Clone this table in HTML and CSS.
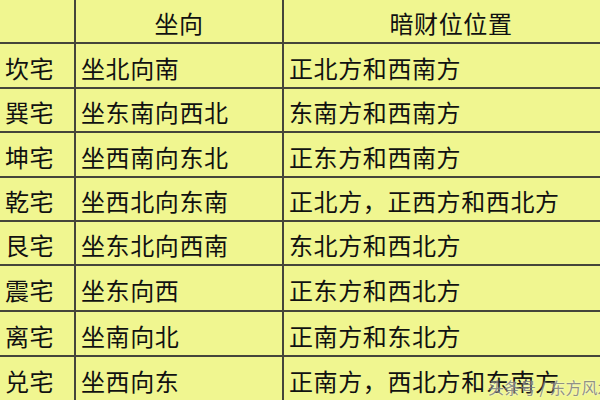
FILE: index.html
```html
<!DOCTYPE html>
<html lang="zh">
<head>
<meta charset="utf-8">
<link rel="stylesheet" href="styles.css">
</head>
<body>
<div class="page">
  <div class="grid">
    <div class="cell"></div>
    <div class="cell head">坐向</div>
    <div class="cell head">暗财位位置</div>

    <div class="cell">坎宅</div>
    <div class="cell">坐北向南</div>
    <div class="cell">正北方和西南方</div>

    <div class="cell">巽宅</div>
    <div class="cell">坐东南向西北</div>
    <div class="cell">东南方和西南方</div>

    <div class="cell">坤宅</div>
    <div class="cell">坐西南向东北</div>
    <div class="cell">正东方和西南方</div>

    <div class="cell">乾宅</div>
    <div class="cell">坐西北向东南</div>
    <div class="cell">正北方，正西方和西北方</div>

    <div class="cell">艮宅</div>
    <div class="cell">坐东北向西南</div>
    <div class="cell">东北方和西北方</div>

    <div class="cell">震宅</div>
    <div class="cell">坐东向西</div>
    <div class="cell">正东方和西北方</div>

    <div class="cell">离宅</div>
    <div class="cell">坐南向北</div>
    <div class="cell">正南方和东北方</div>

    <div class="cell">兑宅</div>
    <div class="cell">坐西向东</div>
    <div class="cell">正南方，西北方和东南方</div>
  </div>
  <div class="watermark">头条号 / 东方风水</div>
</div>
</body>
</html>
```

FILE: styles.css
```css
html, body {
  margin: 0;
  padding: 0;
  background: #f0f690;
}
.page {
  position: relative;
  width: 600px;
  height: 400px;
  overflow: hidden;
}
.grid {
  display: grid;
  grid-template-columns: 74px 206px 334px;
  grid-template-rows: 42px 43px 42px 43px 42px 42px 44px 43px 43px;
  gap: 2px;
  padding: 2px;
  background: #45453a;
  margin: -2px 0 0 -2px;
  width: max-content;
}
.cell {
  background: #f0f690;
  display: flex;
  align-items: center;
  padding: 3px 0 0 5px;
  font-family: "Noto Sans CJK SC", "Noto Sans", sans-serif;
  font-size: 24px;
  letter-spacing: 0.6px;
  color: #111;
  white-space: nowrap;
  box-sizing: border-box;
}
.cell.head {
  justify-content: center;
  padding: 2px 0 0 0;
}
.watermark {
  position: absolute;
  left: 488px;
  top: 375px;
  font-family: "Noto Sans CJK SC", "Noto Sans", sans-serif;
  font-size: 16px;
  color: rgba(110, 110, 110, 0.75);
  text-shadow: 0 0 2px rgba(255, 255, 255, 0.9);
  white-space: nowrap;
}
```
